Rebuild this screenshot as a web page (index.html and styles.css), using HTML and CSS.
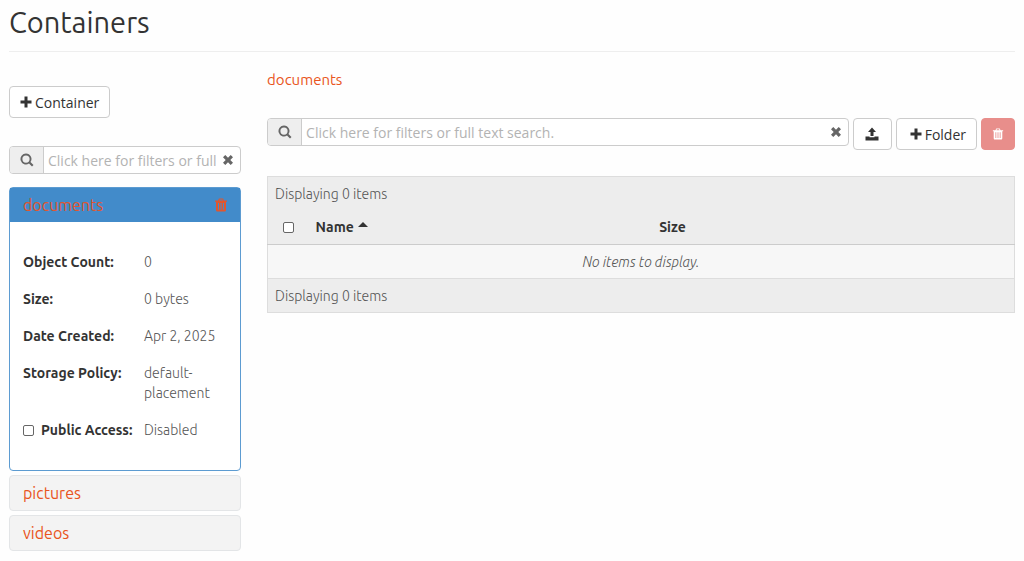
FILE: index.html
```
<!DOCTYPE html>
<html lang="en">
<head>
  <meta charset="utf-8">
  <title>Containers</title>
  <link rel="stylesheet" href="styles.css">
</head>
<body>

  <!-- shared icons -->
  <svg class="sprite" aria-hidden="true">
    <symbol id="plus" viewBox="0 0 12 12"><path d="M4.500.5h3v4h4v3h-4v4h-3v-4h-4v-3h4z"/></symbol>
    <symbol id="search" viewBox="0 0 14 14"><path d="M6 0.500a5.500 5.500 0 1 0 3 10.100l3 3 1.500-1.500-3-3A5.500 5.500 0 0 0 6 .5zm0 2a3.600 3.600 0 1 1 0 7.200 3.600 3.600 0 0 1 0-7.200z"/></symbol>
    <symbol id="times" viewBox="0 0 12 12"><path d="M3.300 1L6 3.700 8.700 1 11 3.300 8.300 6 11 8.700 8.700 11 6 8.300 3.300 11 1 8.700 3.700 6 1 3.300z"/></symbol>
    <symbol id="trash" viewBox="0 0 12 14"><path fill-rule="evenodd" d="M4 .5h4l1 2h3v1.300h-1V12c0 .9-.5 1.500-1.300 1.500H2.300C1.500 13.500 1 12.900 1 12V3.800H0V2.500h3zm.7 1l-.5 1h3.600l-.5-1zM3 5v6.800h1V5zm2.500 0v6.800h1V5zM8 5v6.800h1V5z"/></symbol>
    <symbol id="upload" viewBox="0 0 14 14"><path d="M7 .5L11 5H8.500v4h-3V5H3zM.5 9.500h4v.8h5v-.8h4v4H.5z"/></symbol>
  </svg>

  <header class="page-header">
    <h1>Containers</h1>
  </header>

  <main class="columns">
    <aside>
      <button type="button" class="btn"><svg class="icon"><use href="#plus"/></svg>Container</button>

      <div class="search side-search">
        <span class="addon"><svg class="icon search-icon"><use href="#search"/></svg></span>
        <input type="text" aria-label="Filter containers" placeholder="Click here for filters or full text search.">
        <button type="button" class="clear" aria-label="Clear"><svg class="icon"><use href="#times"/></svg></button>
      </div>

      <section class="panel active">
        <div class="panel-heading">
          <a href="#">documents</a>
          <button type="button" class="delete" aria-label="Delete container"><svg class="icon trash"><use href="#trash"/></svg></button>
        </div>
        <dl class="details">
          <dt>Object Count:</dt>
          <dd>0</dd>
          <dt>Size:</dt>
          <dd>0 bytes</dd>
          <dt>Date Created:</dt>
          <dd>Apr 2, 2025</dd>
          <dt>Storage Policy:</dt>
          <dd>default-placement</dd>
          <dt class="access"><input type="checkbox" id="public"><label for="public">Public Access:</label></dt>
          <dd>Disabled</dd>
        </dl>
      </section>
      <section class="panel"><div class="panel-heading"><a href="#">pictures</a></div></section>
      <section class="panel"><div class="panel-heading"><a href="#">videos</a></div></section>
    </aside>

    <div class="content">
      <nav><a href="#">documents</a></nav>

      <div class="toolbar">
        <div class="search">
          <span class="addon"><svg class="icon search-icon"><use href="#search"/></svg></span>
          <input type="text" aria-label="Filter objects" placeholder="Click here for filters or full text search.">
          <button type="button" class="clear" aria-label="Clear"><svg class="icon"><use href="#times"/></svg></button>
        </div>
        <button type="button" class="btn upload" aria-label="Upload"><svg class="icon"><use href="#upload"/></svg></button>
        <button type="button" class="btn folder"><svg class="icon"><use href="#plus"/></svg>Folder</button>
        <button type="button" class="btn danger" aria-label="Delete" disabled><svg class="icon"><use href="#trash"/></svg></button>
      </div>

      <table>
        <colgroup>
          <col class="col-check">
          <col class="col-name">
          <col>
        </colgroup>
        <thead>
          <tr><td colspan="3">Displaying 0 items</td></tr>
          <tr>
            <th class="check"><input type="checkbox" aria-label="Select all"></th>
            <th>Name<span class="caret"></span></th>
            <th>Size</th>
          </tr>
        </thead>
        <tbody>
          <tr><td colspan="3" class="empty">No items to display.</td></tr>
        </tbody>
        <tfoot>
          <tr><td colspan="3">Displaying 0 items</td></tr>
        </tfoot>
      </table>
    </div>
  </main>

</body>
</html>
```

FILE: styles.css
```
* {
  box-sizing: border-box;
}
body {
  margin: 0;
  padding: 0 9px;
  background: #fefefe;
  color: #333;
  font-family: Ubuntu, "Noto Sans", "Open Sans", sans-serif;
  font-size: 14px;
  line-height: 20px;
}
a {
  color: #e95420;
  text-decoration: none;
}
button, input {
  font-family: "Open Sans", "Noto Sans", sans-serif;
  font-size: 14px;
}
.sprite {
  display: none;
}
.icon {
  width: 12px;
  height: 12px;
  fill: currentColor;
}
.search-icon {
  width: 14px;
  height: 14px;
}
.trash {
  height: 14px;
}
.page-header {
  padding: 6px 0 13px;
  border-bottom: 1px solid #eee;
}
h1 {
  margin: 0;
  font-size: 29px;
  font-weight: 400;
  line-height: 32px;
}
.columns {
  display: grid;
  grid-template-columns: minmax(0, 9fr) minmax(0, 29fr);
  gap: 26px;
}
aside {
  padding-top: 34px;
}

/* buttons */
.btn {
  display: inline-flex;
  align-items: center;
  justify-content: center;
  gap: 3px;
  height: 32px;
  padding: 0 10px;
  border: 1px solid #ccc;
  border-radius: 4px;
  background: #fff;
  color: #333;
}
.upload {
  width: 39px;
}
.upload .icon {
  width: 14px;
  height: 14px;
}
.folder {
  padding-left: 13px;
}
.danger {
  width: 34px;
  border-color: #e88e8b;
  background: #e88e8b;
  color: #fff;
}

/* search box */
.search {
  display: flex;
  height: 28px;
  border: 1px solid #ccc;
  border-radius: 4px;
  background: #fff;
  overflow: hidden;
  color: #666;
}
.side-search {
  margin: 28px 0 13px;
}
.addon {
  display: flex;
  align-items: center;
  justify-content: center;
  width: 34px;
  flex-shrink: 0;
  border-right: 1px solid #ccc;
  background: #eee;
}
.search input {
  flex: 1;
  min-width: 0;
  padding: 0 4px;
  border: 0;
  outline: 0;
  background: none;
}
.search input::placeholder {
  color: #b3b3b3;
}
.clear, .delete {
  display: flex;
  align-items: center;
  padding: 0;
  border: 0;
  background: none;
  color: #666;
}
.clear {
  padding: 0 6px 0 2px;
}

/* container list */
.panel {
  margin-bottom: 4px;
  border: 1px solid #e3e5e7;
  border-radius: 4px;
  background: #f3f3f3;
}
.panel-heading {
  display: flex;
  align-items: center;
  justify-content: space-between;
  height: 34px;
  padding: 0 13px;
  font-size: 16px;
}
.active {
  border-color: #5c9bd1;
  background: #fff;
}
.active .panel-heading {
  background: #428bca;
}
.active a, .delete {
  color: #e0562f;
}
.details {
  display: grid;
  grid-template-columns: 121px 1fr;
  row-gap: 17px;
  margin: 0;
  padding: 30px 13px;
}
dt {
  font-weight: 600;
  white-space: nowrap;
}
dd {
  margin: 0;
  color: #555;
  font-weight: 300;
}
input[type="checkbox"] {
  appearance: none;
  width: 11px;
  height: 11px;
  margin: 0;
  border: 1px solid #666;
  border-radius: 2px;
  background: #fff;
}
.access {
  display: flex;
  align-items: center;
  gap: 7px;
}

/* objects */
nav {
  padding-top: 18px;
  font-size: 15px;
}
.toolbar {
  display: flex;
  gap: 4px;
  margin: 28px 0 26px;
}
.toolbar .search {
  flex: 1;
}
table {
  width: 100%;
  table-layout: fixed;
  border-collapse: collapse;
  border: 1px solid #ddd;
  color: #555;
  font-weight: 300;
}
.col-check {
  width: 41px;
}
.col-name {
  width: 46%;
}
th, td {
  height: 34px;
  padding: 0 7px;
  text-align: left;
}
thead, tfoot {
  background: #ededed;
}
th {
  color: #333;
  font-weight: 600;
}
.check {
  padding-left: 15px;
}
.check input {
  display: block;
}
.caret {
  display: inline-block;
  margin-left: 4px;
  border: 5px solid transparent;
  border-top: 0;
  border-bottom-color: #333;
  vertical-align: 5px;
}
tbody td {
  border-top: 1px solid #ccc;
  border-bottom: 1px solid #ddd;
  background: #f7f7f7;
}
.empty {
  font-style: italic;
  text-align: center;
}
```
